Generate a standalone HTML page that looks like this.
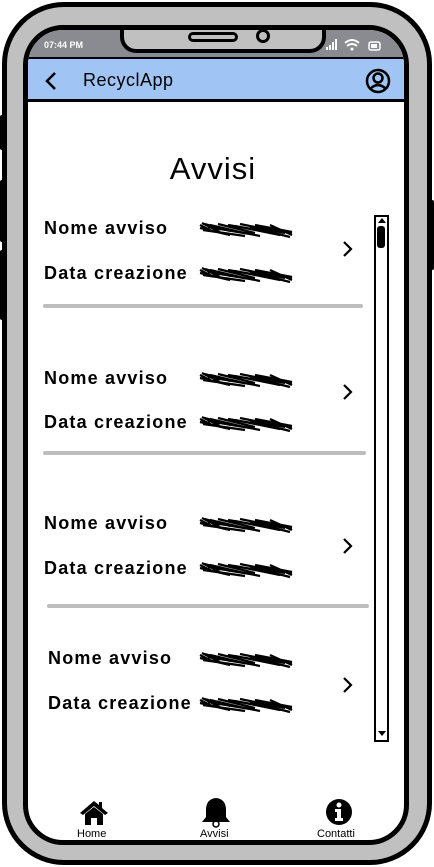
<!DOCTYPE html>
<html><head><meta charset="utf-8"><style>
*{margin:0;padding:0;box-sizing:border-box}
body{width:434px;height:867px;background:#fff;position:relative;overflow:hidden;font-family:"Liberation Sans",sans-serif;color:#000}
.abs{position:absolute}
.outer{left:2px;top:2px;width:430px;height:863px;border:5px solid #000;border-radius:62px;background:#c0c0c0}
.screen{left:23px;top:25px;width:386px;height:820px;border:5px solid #000;border-radius:40px;background:#fff;overflow:hidden}
.status{left:0;top:0;width:376px;height:30px;background:#898b90}
.header{left:0;top:27px;width:376px;height:45px;background:#a0c4f4;border-top:2px solid #000;border-bottom:3px solid #000}
.lbl{font-size:18px;font-weight:bold;letter-spacing:1.2px}
.sep{height:4px;background:#bdbdbd;border-radius:2px}
</style></head><body>
<div class="abs" style="left:0;top:115px;width:6px;height:35px;background:#000;border-radius:2px"></div>
<div class="abs" style="left:0;top:180px;width:6px;height:62px;background:#000;border-radius:2px"></div>
<div class="abs" style="left:0;top:250px;width:6px;height:70px;background:#000;border-radius:2px"></div>
<div class="abs" style="left:428px;top:200px;width:6px;height:70px;background:#000;border-radius:2px"></div>
<div class="abs outer"></div>
<div class="abs screen">
 <div class="abs status"></div>
 <div class="abs" style="left:16px;top:10px;font-size:9px;color:#fff;font-weight:bold">07:44 PM</div>
 <svg class="abs" style="left:296px;top:7px" width="60" height="16"><rect x="2" y="10" width="2" height="3" fill="#fff"/><rect x="5" y="8" width="2" height="5" fill="#fff"/><rect x="8" y="5" width="2" height="8" fill="#fff"/><rect x="11" y="2" width="2" height="11" fill="#fff"/><path d="M21 6 Q28 0 35 6 M23 9 Q28 5 33 9" stroke="#fff" stroke-width="2" fill="none"/><circle cx="28" cy="12" r="1.5" fill="#fff"/><rect x="45" y="5" width="11" height="8" rx="2" stroke="#fff" stroke-width="1.5" fill="none"/><rect x="47" y="7" width="6" height="4" fill="#fff"/></svg>
 <div class="abs header"></div>
 <div class="abs" style="left:92px;top:-5px;width:206px;height:28px;background:#c0c0c0;border:4px solid #000;border-top:none;border-radius:0 0 16px 16px"></div>
 <div class="abs" style="left:160px;top:2px;width:50px;height:10px;border:3px solid #000;border-radius:6px;background:#c0c0c0"></div>
 <div class="abs" style="left:228px;top:-1px;width:14px;height:14px;border:3px solid #000;border-radius:50%;background:#c0c0c0"></div>
 <svg class="abs" style="left:16px;top:41px" width="14" height="20"><path d="M11 2 L3 10 L11 18" stroke="#000" stroke-width="2.5" fill="none"/></svg>
 <div class="abs" style="left:55px;top:40px;font-size:18px;letter-spacing:.5px">RecyclApp</div>
 <svg class="abs" style="left:337px;top:38px" width="26" height="26"><circle cx="13" cy="13" r="11" stroke="#000" stroke-width="2.5" fill="none"/><circle cx="13" cy="10" r="4.5" stroke="#000" stroke-width="2.5" fill="none"/><path d="M5 21 Q13 13 21 21" stroke="#000" stroke-width="2.5" fill="none"/></svg>
 <div class="abs" style="left:-3px;width:376px;top:121px;text-align:center;font-size:31px;letter-spacing:1px">Avvisi</div>

 <div class="abs" style="left:346px;top:185px;width:15px;height:527px;border:2px solid #000;background:#fff"></div>
 <div class="abs" style="left:350px;top:188px;width:0;height:0;border-left:4px solid transparent;border-right:4px solid transparent;border-bottom:5px solid #000"></div>
 <div class="abs" style="left:349px;top:196px;width:8px;height:22px;background:#000;border-radius:3px"></div>
 <div class="abs" style="left:350px;top:701px;width:0;height:0;border-left:4px solid transparent;border-right:4px solid transparent;border-top:5px solid #000"></div>

 <svg class="abs" style="left:0;top:0" width="376" height="810">
  <defs><g id="scr"><path d="M0 2 L12 8 M2 0 L20 9 M5 1 L30 8 M10 2 L40 9 M18 1 L55 10 M28 2 L70 9 M40 1 L85 10 M55 2 L92 9 M70 2 L92 12 M0 5 L30 12 M20 5 L60 13 M50 4 L90 14 M3 7 L45 13 M8 4 L50 11 M35 3 L80 12 M60 5 L92 10" stroke="#000" stroke-width="2.2" fill="none"/></g></defs>
  <use href="#scr" x="172" y="193"/><use href="#scr" x="172" y="238"/>
  <use href="#scr" x="172" y="343"/><use href="#scr" x="172" y="387"/>
  <use href="#scr" x="172" y="488"/><use href="#scr" x="172" y="533"/>
  <use href="#scr" x="172" y="623"/><use href="#scr" x="172" y="668"/>
  <g stroke="#000" stroke-width="2.2" fill="none"><path d="M316 212 L323 219 L316 226"/><path d="M316 355 L323 362 L316 369"/><path d="M316 509 L323 516 L316 523"/><path d="M316 648 L323 655 L316 662"/></g>
 </svg>
 <div class="abs lbl" style="left:16px;top:188px">Nome avviso</div>
 <div class="abs lbl" style="left:16px;top:233px">Data creazione</div>
 <div class="abs sep" style="left:15px;top:274px;width:320px"></div>
 <div class="abs lbl" style="left:16px;top:338px">Nome avviso</div>
 <div class="abs lbl" style="left:16px;top:382px">Data creazione</div>
 <div class="abs sep" style="left:15px;top:421px;width:323px"></div>
 <div class="abs lbl" style="left:16px;top:483px">Nome avviso</div>
 <div class="abs lbl" style="left:16px;top:528px">Data creazione</div>
 <div class="abs sep" style="left:19px;top:574px;width:322px"></div>
 <div class="abs lbl" style="left:20px;top:618px">Nome avviso</div>
 <div class="abs lbl" style="left:20px;top:663px">Data creazione</div>

 <svg class="abs" style="left:50px;top:768px" width="32" height="28"><path d="M16 3 L2 15 L5 17 L16 8 L27 17 L30 15 L24 10 L24 4 L21 4 L21 7 Z" fill="#000"/><path d="M7 16 L16 9 L25 16 L25 27 L19 27 L19 20 L13 20 L13 27 L7 27 Z" fill="#000"/></svg>
 <div class="abs" style="left:49px;top:798px;font-size:11px">Home</div>
 <svg class="abs" style="left:173px;top:764px" width="30" height="34"><path d="M15 1 L15 4 Q5 5 5 16 L5 23 L1 28 L29 28 L25 23 L25 16 Q25 5 15 4" fill="#000"/><circle cx="15" cy="30" r="3" fill="none" stroke="#000" stroke-width="1.5"/></svg>
 <div class="abs" style="left:172px;top:798px;font-size:11px">Avvisi</div>
 <svg class="abs" style="left:297px;top:768px" width="28" height="28"><circle cx="14" cy="14" r="13" fill="#000"/><circle cx="14" cy="7" r="2.5" fill="#fff"/><path d="M10 11 L16 11 L16 20 L18 20 L18 23 L10 23 L10 20 L12 20 L12 14 L10 14 Z" fill="#fff"/></svg>
 <div class="abs" style="left:289px;top:798px;font-size:11px">Contatti</div>
</div>
</body></html>
